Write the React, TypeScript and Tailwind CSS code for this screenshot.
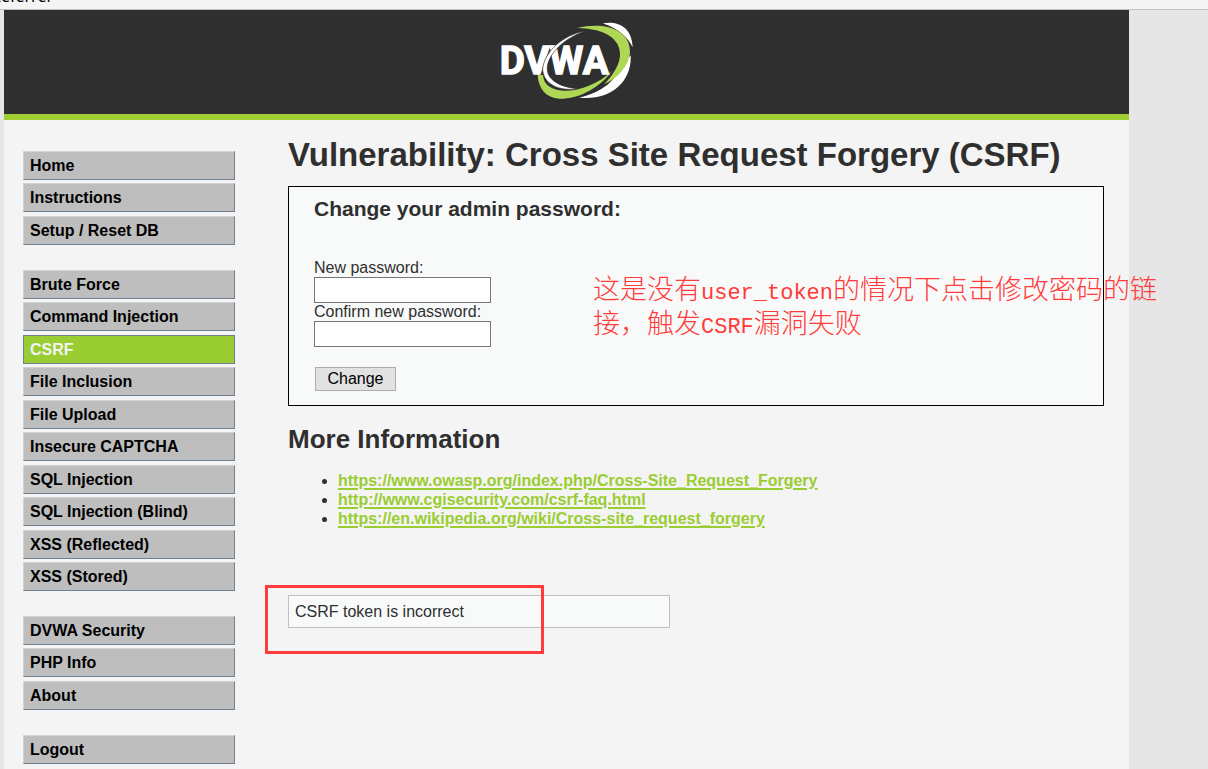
const menuGroups: string[][] = [
  ["Home", "Instructions", "Setup / Reset DB"],
  [
    "Brute Force",
    "Command Injection",
    "CSRF",
    "File Inclusion",
    "File Upload",
    "Insecure CAPTCHA",
    "SQL Injection",
    "SQL Injection (Blind)",
    "XSS (Reflected)",
    "XSS (Stored)",
  ],
  ["DVWA Security", "PHP Info", "About"],
  ["Logout"],
];

const links = [
  "https://www.owasp.org/index.php/Cross-Site_Request_Forgery",
  "http://www.cgisecurity.com/csrf-faq.html",
  "https://en.wikipedia.org/wiki/Cross-site_request_forgery",
];

function Logo() {
  return (
    <svg viewBox="30 30 399 240" className="h-[80px] w-[133px]" role="img" aria-label="DVWA">
      <path
        d="M338 40 C385 32 426 52 428 112 C414 84 388 56 338 40Z M422 136 C426 212 366 272 268 263 C340 246 380 206 386 176Z"
        fill="#fff"
      />
      <path
        d="M262 54 C330 36 422 50 420 128 C416 168 384 204 342 223 C372 192 390 162 390 132 C390 90 350 56 262 54Z"
        fill="#b0d655"
      />
      <path
        d="M143 195 L159 195 C162 262 286 258 366 183 C318 248 248 268 208 266 C168 264 145 236 143 195Z"
        fill="#b0d655"
      />
      <text
        x="29"
        y="193"
        className="font-['Roboto',sans-serif] font-bold"
        fontSize="116"
        fill="#fff"
        stroke="#fff"
        strokeWidth="4"
      >
        DVWA
      </text>
      <path
        d="M284 64 C220 74 164 124 158 176 C158 220 206 246 264 236 C214 232 168 212 172 170 C178 128 222 86 284 64Z"
        fill="#fff"
        stroke="#2f2f2f"
        strokeWidth="2"
      />
    </svg>
  );
}

function Menu() {
  return (
    <nav className="flex w-[212px] shrink-0 flex-col gap-[25px]">
      {menuGroups.map((group) => (
        <ul key={group[0]}>
          {group.map((item) => (
            <li key={item} className="odd:mb-[3px] even:mb-[4px] last:mb-0!">
              <a
                href="#"
                aria-current={item === "CSRF" ? "page" : undefined}
                className={
                  item === "CSRF"
                    ? "block h-[29px] border border-[#708090] bg-[#9acd32] pl-[6px] text-base leading-[27px] font-bold text-[#f4f4f4]"
                    : "block h-[29px] border border-t-[#d3d3d3] border-r-[#708090] border-b-[#708090] border-l-[#d3d3d3] bg-[#bebebe] pl-[6px] text-base leading-[27px] font-bold text-black"
                }
              >
                {item}
              </a>
            </li>
          ))}
        </ul>
      ))}
    </nav>
  );
}

function PasswordForm() {
  return (
    <section className="relative h-[220px] border border-black bg-[#f8faf9] px-[25px] pt-[10px]">
      <h3 className="text-[21px] leading-[24px] font-bold">Change your admin password:</h3>
      <form className="mt-[38px] flex flex-col items-start leading-[18px]">
        <label htmlFor="new-password">New password:</label>
        <input
          id="new-password"
          type="password"
          className="h-[26px] w-[177px] border border-[#767676] bg-white px-1"
        />
        <label htmlFor="confirm-password">Confirm new password:</label>
        <input
          id="confirm-password"
          type="password"
          className="h-[26px] w-[177px] border border-[#767676] bg-white px-1"
        />
        <button
          type="button"
          className="mt-[20px] ml-px h-[24px] w-[81px] border border-[#adadad] bg-[#e1e1e1] leading-[22px] text-black"
        >
          Change
        </button>
      </form>
      <p className="absolute top-[84px] left-[304px] font-['Noto_Sans_CJK_SC',sans-serif] text-[27px] leading-[34px] font-light whitespace-nowrap text-[#ff3b3b]">
        这是没有<span className="font-['Liberation_Mono',monospace] text-[22px] leading-none font-normal">user_token</span>的情况下点击修改密码的链
        <br />
        接，触发<span className="font-['Liberation_Mono',monospace] text-[22px] leading-none font-normal">CSRF</span>漏洞失败
      </p>
    </section>
  );
}

export default function App() {
  return (
    <div className="flex min-h-screen flex-col bg-[#e6e6e6] font-['Liberation_Sans',Arial,sans-serif] text-base text-[#2f2f2f]">
      <div className="flex h-[10px] items-end overflow-hidden border-b border-[#c0c0c0] bg-[#f5f5f5]">
        <span className="-ml-[9px] pb-[3px] font-['Noto_Sans',sans-serif] text-base leading-[20px] text-black">Referrer</span>
      </div>
      <div className="mr-[79px] ml-1 flex grow flex-col bg-[#f4f4f4]">
        <header className="flex justify-center border-b-[6px] border-[#a0cd32] bg-[#2f2f2f] pt-[10px] pb-[14px]">
          <Logo />
        </header>
        <div className="flex gap-[53px] pr-[25px] pl-[19px]">
          <div className="pt-[31px] pb-[5px]">
            <Menu />
          </div>
          <main className="min-w-0 grow pt-[14px]">
            <h1 className="text-[33px] leading-[42px] font-bold">
              Vulnerability: Cross Site Request Forgery (CSRF)
            </h1>
            <div className="mt-[10px]">
              <PasswordForm />
            </div>
            <h2 className="mt-[18px] text-[26px] leading-[30px] font-bold">More Information</h2>
            <ul className="mt-[17px] list-disc pl-[50px]">
              {links.map((url) => (
                <li key={url} className="leading-[19px]">
                  <a
                    href={url}
                    className="font-bold text-[#9acd32] underline decoration-2 underline-offset-2"
                  >
                    {url}
                  </a>
                </li>
              ))}
            </ul>
            <div className="relative mt-[67px] h-[33px] w-[382px] border border-[#c0c0c0] bg-[#f8faf9] pl-[6px] leading-[31px]">
              CSRF token is incorrect
              <div className="pointer-events-none absolute -top-[11px] -left-[24px] h-[69px] w-[279px] border-3 border-[#ff3b3b]" />
            </div>
          </main>
        </div>
      </div>
    </div>
  );
}
